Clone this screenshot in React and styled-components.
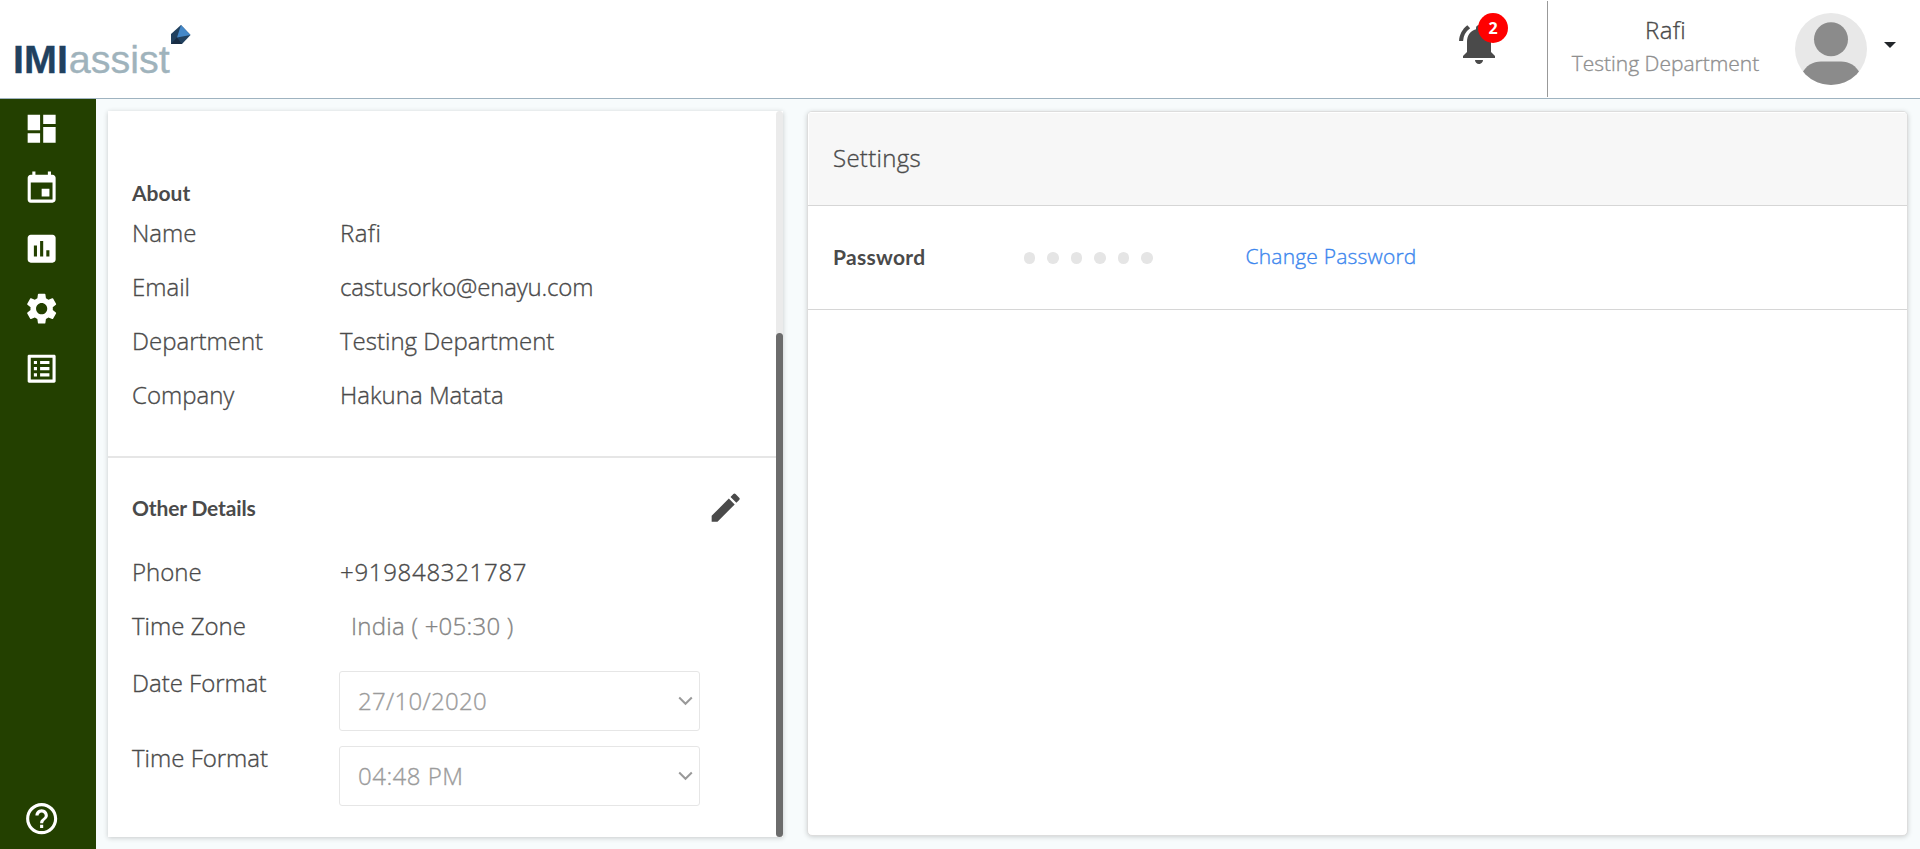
import React from 'react';
import styled, { createGlobalStyle } from 'styled-components';
import {
  MdDashboard,
  MdEvent,
  MdAssessment,
  MdSettings,
  MdListAlt,
  MdHelpOutline,
  MdEdit,
  MdNotificationsActive,
} from 'react-icons/md';

const GlobalStyle = createGlobalStyle`
  *, *::before, *::after { box-sizing: border-box; }
  body {
    margin: 0;
    background: #f7fbfc;
    color: #4a4a4a;
    font-family: "Open Sans", "Noto Sans", sans-serif;
    font-weight: 300;
    font-size: 24px;
    -webkit-text-stroke: 0.35px currentColor;
  }
  svg { display: block; }
`;

const Page = styled.div`
  display: flex;
  flex-direction: column;
  height: 849px;
  overflow: hidden;
`;

const Header = styled.header`
  display: flex;
  align-items: flex-start;
  justify-content: space-between;
  flex: none;
  height: 99px;
  background: #fff;
  border-bottom: 1px solid #9fb3c0;
`;

const Logo = styled.div`
  display: flex;
  align-items: flex-start;
  padding: 25px 0 0 13px;
  font-family: "Liberation Sans", Arial, sans-serif;
  font-size: 39.5px;
  font-weight: 400;
  line-height: 44px;
  color: #9fb3bc;
`;

const Wordmark = styled.div`
  margin-top: 12px;
`;

const WordmarkBold = styled.span`
  font-weight: 700;
  color: #21415f;
  margin-right: 1px;
`;

const Gem = styled.svg`
  margin-left: 1px;
`;

const HeaderRight = styled.div`
  display: flex;
  height: 98px;
  padding-right: 24px;
`;

const Bell = styled.div`
  position: relative;
  width: 48px;
  margin: 20px 44px 0 0;
  color: #4a4a4a;
`;

const Badge = styled.span`
  position: absolute;
  top: -7px;
  left: 23px;
  width: 30px;
  height: 30px;
  border-radius: 50%;
  background: #f00;
  color: #fff;
  font-size: 16px;
  font-weight: 700;
  line-height: 30px;
  text-align: center;
  -webkit-text-stroke: 0;
`;

const Account = styled.div`
  width: 238px;
  height: 96px;
  margin-top: 1px;
  padding: 13px 2px 0 0;
  border-left: 1px solid #999;
  text-align: center;
`;

const AccountName = styled.div`
  height: 32px;
  line-height: 32px;
  letter-spacing: 0.3px;
`;

const AccountDept = styled.div`
  height: 34px;
  line-height: 34px;
  font-size: 21px;
  color: #8f8f8f;
`;

const Avatar = styled.svg`
  margin: 13px 0 0 10px;
`;

const Caret = styled.span`
  width: 0;
  height: 0;
  margin: 42px 0 0 17px;
  border: 6.5px solid transparent;
  border-top-color: #212529;
  border-bottom: 0;
`;

const Body = styled.div`
  display: flex;
  flex: 1;
  min-height: 0;
`;

const Sidebar = styled.nav`
  display: flex;
  flex-direction: column;
  justify-content: space-between;
  width: 96px;
  background: #234000;
  color: #fff;
`;

const NavItem = styled.div`
  display: flex;
  align-items: center;
  justify-content: center;
  width: 84px;
  height: 60px;
`;

const Main = styled.main`
  display: flex;
  flex: 1;
  gap: 24px;
  padding: 12px 12px;
`;

const ProfilePanel = styled.section`
  display: flex;
  width: 675px;
  height: 726px;
  background: #fff;
  box-shadow: 0 1px 5px rgba(0, 0, 0, 0.2);
`;

const ProfileContent = styled.div`
  flex: 1;
`;

const ScrollTrack = styled.div`
  display: flex;
  align-items: flex-end;
  width: 7px;
  border-radius: 4px;
  background: #ebebeb;
`;

const ScrollThumb = styled.div`
  width: 7px;
  height: 504px;
  border-radius: 4px;
  background: #6c6c6c;
`;

const AboutSection = styled.div`
  height: 347px;
  padding: 69px 24px 0;
  border-bottom: 2px solid #e6e6e6;
`;

const OtherSection = styled.div`
  padding: 23px 24px 0;
`;

const Heading = styled.h2`
  margin: 0;
  padding-bottom: 1px;
  font-family: Lato, sans-serif;
  font-size: 21px;
  font-weight: 700;
  line-height: 25px;
  letter-spacing: ${(p) => p.$track || 0}px;
  -webkit-text-stroke: 0;
`;

const HeadingRow = styled.div`
  display: flex;
  align-items: center;
  justify-content: space-between;
  height: 54px;
  margin-bottom: 10px;
  padding-right: 8px;
`;

const Row = styled.div`
  display: grid;
  grid-template-columns: 207px 1fr;
  height: ${(p) => (p.$tall ? 75 : 54)}px;
  padding-top: ${(p) => (p.$tall ? 3 : 0)}px;
  line-height: 54px;
`;

const Value = styled.span`
  padding-left: ${(p) => (p.$muted ? 12 : 1)}px;
  color: ${(p) => (p.$muted ? '#848484' : 'inherit')};
  letter-spacing: ${(p) => p.$track || 0}px;
  white-space: nowrap;
`;

const Select = styled.div`
  display: flex;
  align-items: center;
  justify-content: space-between;
  width: 361px;
  height: 60px;
  margin-top: 15px;
  padding: 0 6px 0 18px;
  border: 1px solid #e6e6e6;
  border-radius: 3px;
  color: #9b9b9b;
  letter-spacing: ${(p) => p.$track}px;
`;

const SettingsPanel = styled.section`
  flex: 1;
  height: 725px;
  border: 1px solid #ddd;
  border-radius: 5px;
  background: #fff;
  box-shadow: 0 1px 5px rgba(0, 0, 0, 0.18);
  overflow: hidden;
`;

const SettingsTitle = styled.div`
  height: 94px;
  padding-left: 25px;
  border-bottom: 1px solid #d6d6d6;
  background: #f7f7f7;
  box-shadow: inset 1px 1px 0 #fff;
  line-height: 91px;
  letter-spacing: 0.3px;
`;

const PasswordRow = styled.div`
  display: flex;
  align-items: center;
  height: 104px;
  padding-left: 25px;
  border-bottom: 1px solid #d6d6d6;
`;

const PasswordLabel = styled.div`
  width: 190.5px;
  padding-bottom: 2px;
`;

const Dots = styled.div`
  display: flex;
  gap: 12px;
  width: 222px;
  padding-top: 1px;
`;

const Dot = styled.span`
  width: 11.5px;
  height: 11.5px;
  border-radius: 50%;
  background: #e5e5e5;
`;

const Link = styled.a`
  padding-bottom: 3px;
  color: #3b86ee;
  font-size: 21px;
  letter-spacing: 0.2px;
`;

const navIcons = [MdDashboard, MdEvent, MdAssessment, MdSettings, MdListAlt];

const about = [
  { label: 'Name', value: 'Rafi', track: 0.4 },
  { label: 'Email', value: 'castusorko@enayu.com', track: -0.17 },
  { label: 'Department', value: 'Testing Department' },
  { label: 'Company', value: 'Hakuna Matata' },
];

const Chevron = () => (
  <svg width="15" height="10" viewBox="0 0 15 10" fill="none" stroke="#999" strokeWidth="2">
    <path d="M1.2 1.5 7.5 7.8 13.8 1.5" />
  </svg>
);

export default function App() {
  return (
    <Page>
      <GlobalStyle />
      <Header>
        <Logo>
          <Wordmark>
            <WordmarkBold>IMI</WordmarkBold>assist
          </Wordmark>
          <Gem width="20" height="20" viewBox="0 0 20 20">
            <path d="M0 9 10 0 19.5 10 11 19H0Z" fill="#21415f" />
            <path d="M10 0 19.5 10 6 12.5Z" fill="#4488c8" />
            <path d="M0 19 6 12.5 11 19Z" fill="#182c44" />
          </Gem>
        </Logo>
        <HeaderRight>
          <Bell>
            <MdNotificationsActive size={48} />
            <Badge>2</Badge>
          </Bell>
          <Account>
            <AccountName>Rafi</AccountName>
            <AccountDept>Testing Department</AccountDept>
          </Account>
          <Avatar width="72" height="72" viewBox="0 0 72 72">
            <defs>
              <clipPath id="avatar">
                <circle cx="36" cy="36" r="36" />
              </clipPath>
            </defs>
            <g clipPath="url(#avatar)">
              <rect width="72" height="72" fill="#e8e8e8" />
              <circle cx="36" cy="26.3" r="17" fill="#8b8b8b" />
              <path d="M6 62C11 52 18 48.5 26 48.5H46C54 48.5 61 52 66 62V72H6Z" fill="#8b8b8b" />
            </g>
          </Avatar>
          <Caret />
        </HeaderRight>
      </Header>
      <Body>
        <Sidebar>
          <div>
            {navIcons.map((Icon, i) => (
              <NavItem key={i}>
                <Icon size={37.3} />
              </NavItem>
            ))}
          </div>
          <NavItem>
            <MdHelpOutline size={37.3} />
          </NavItem>
        </Sidebar>
        <Main>
          <ProfilePanel>
            <ProfileContent>
              <AboutSection>
                <Heading>About</Heading>
                {about.map((r) => (
                  <Row key={r.label}>
                    <span>{r.label}</span>
                    <Value $track={r.track}>{r.value}</Value>
                  </Row>
                ))}
              </AboutSection>
              <OtherSection>
                <HeadingRow>
                  <Heading $track={-0.15}>Other Details</Heading>
                  <MdEdit size={37.3} />
                </HeadingRow>
                <Row>
                  <span>Phone</span>
                  <Value $track={0.7}>+919848321787</Value>
                </Row>
                <Row>
                  <span>Time Zone</span>
                  <Value $muted $track={0.25}>
                    India ( +05:30 )
                  </Value>
                </Row>
                <Row $tall>
                  <span>Date Format</span>
                  <Select $track={0.3}>
                    27/10/2020
                    <Chevron />
                  </Select>
                </Row>
                <Row $tall>
                  <span>Time Format</span>
                  <Select $track={0.5}>
                    04:48 PM
                    <Chevron />
                  </Select>
                </Row>
              </OtherSection>
            </ProfileContent>
            <ScrollTrack>
              <ScrollThumb />
            </ScrollTrack>
          </ProfilePanel>
          <SettingsPanel>
            <SettingsTitle>Settings</SettingsTitle>
            <PasswordRow>
              <PasswordLabel>
                <Heading $track={0.3}>Password</Heading>
              </PasswordLabel>
              <Dots>
                {[0, 1, 2, 3, 4, 5].map((n) => (
                  <Dot key={n} />
                ))}
              </Dots>
              <Link>Change Password</Link>
            </PasswordRow>
          </SettingsPanel>
        </Main>
      </Body>
    </Page>
  );
}
